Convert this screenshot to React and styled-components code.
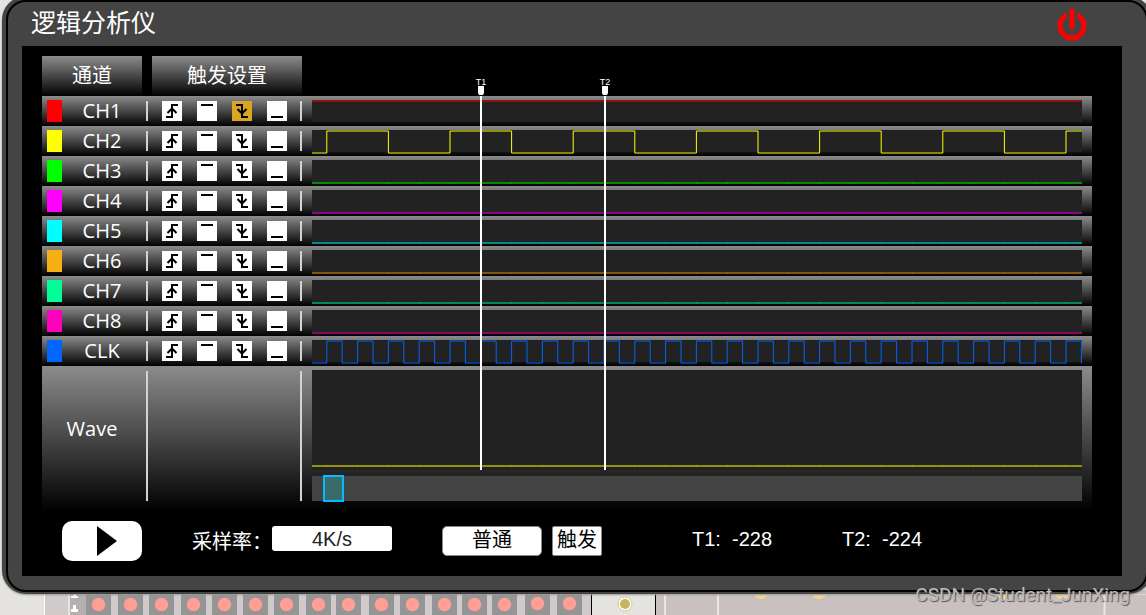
import React, { useState } from "react";
import styled, { createGlobalStyle, css } from "styled-components";

const GlobalStyle = createGlobalStyle`
  * { box-sizing: border-box; }
  body {
    margin: 0;
    min-height: 100vh;
    overflow: hidden;
    background: #e4e3df;
    font-family: "Open Sans", "Noto Sans CJK SC", sans-serif;
    color: #fff;
  }
`;

const metal = css`
  background: linear-gradient(#8c8c8c, #000);
`;

const Page = styled.div`
  position: relative;
  min-height: 100vh;
  overflow: hidden;
`;

const Frame = styled.main`
  position: relative;
  margin: -4px -6px 0 2px;
  padding: 4px 4px 2px;
  background: #444;
  border-radius: 24px;
  box-shadow: 0 1px 2px #999;
`;

const Bezel = styled.div`
  border: 2px solid #000;
  border-radius: 20px;
  padding: 0 24px 14px 14px;
`;

const TitleBar = styled.header`
  display: flex;
  align-items: center;
  justify-content: space-between;
  height: 44px;
  padding: 0 33px 0 9px;
`;

const Title = styled.h1`
  margin: 0 0 4px;
  font-size: 25px;
  line-height: 40px;
  font-weight: 400;
`;

const PowerButton = styled.button`
  display: flex;
  padding: 0;
  border: 0;
  background: none;
`;

const Screen = styled.section`
  background: #000;
  padding: 10px 30px 15px 20px;
`;

const Headings = styled.div`
  display: flex;
  gap: 10px;
`;

const Heading = styled.h2`
  ${metal}
  width: ${(p) => p.$width}px;
  margin: 0;
  font-size: 20px;
  line-height: 40px;
  font-weight: 400;
  text-align: center;
`;

const Scope = styled.div`
  position: relative;
`;

const Row = styled.div`
  ${metal}
  display: flex;
  align-items: flex-start;
  height: ${(p) => (p.$tall ? 145 : 30)}px;
  padding: 4px 10px 0 5px;
`;

const Swatch = styled.span`
  width: 15px;
  height: 22px;
  background: ${(p) => p.$color};
`;

const ChannelName = styled.span`
  width: 80px;
  margin-right: 4px;
  font-size: 20px;
  line-height: 22px;
  font-weight: 500;
  text-align: center;
`;

const WaveName = styled(ChannelName)`
  width: 90px;
  margin-right: 9px;
  line-height: 118px;
`;

const TriggerSet = styled.div`
  display: flex;
  gap: 15px;
  width: 156px;
  height: ${(p) => (p.$tall ? 130 : 20)}px;
  margin: 1px 10px 0 0;
  padding: 0 13px 0 14px;
  border: solid #d3d3d3;
  border-width: 0 2px;
`;

const TriggerButton = styled.button`
  display: flex;
  width: 20px;
  height: 20px;
  padding: 0;
  border: 0;
  background: ${(p) => (p.$active ? "goldenrod" : "#fff")};
`;

const Lane = styled.div`
  flex: 1;
  min-width: 0;
  height: ${(p) => p.$height}px;
  background: #222;

  svg {
    display: block;
    width: 100%;
    overflow: hidden;
  }
`;

const WaveColumn = styled.div`
  flex: 1;
  min-width: 0;
  display: flex;
  flex-direction: column;
  gap: 6px;

  > div:first-child { flex: none; }
`;

const Scroller = styled.div`
  display: flex;
  align-items: center;
  height: 25px;
  padding-left: 11px;
  background: #444;
`;

const Thumb = styled.button`
  flex: none;
  width: 21px;
  height: 27px;
  padding: 0;
  border: 2px solid #00bfff;
  background: #3a6b6b;
`;

const Marker = styled.div`
  position: absolute;
  top: -18px;
  left: ${(p) => p.$left}px;
  display: flex;
  flex-direction: column;
  align-items: center;
  width: 20px;
  font: 9px/8px "Liberation Sans", sans-serif;

  svg { display: block; }
  &::after {
    content: "";
    width: 2px;
    height: 374px;
    background: #fff;
  }
`;

const Controls = styled.div`
  display: flex;
  align-items: flex-start;
  padding: 10px 0 0 20px;
  font: 20px/24px "Liberation Sans", "Noto Sans CJK SC", sans-serif;
`;

const PlayButton = styled.button`
  display: flex;
  width: 80px;
  height: 40px;
  margin-right: 50px;
  padding: 5px 25px 5px 35px;
  border: 0;
  border-radius: 10px;
  background: #fff;
`;

const RateLabel = styled.label`
  width: 80px;
  padding-top: 9px;
  white-space: nowrap;
`;

const RateSelect = styled.select`
  appearance: none;
  width: 120px;
  height: 25px;
  margin: 5px 50px 0 0;
  padding: 0;
  border: 0;
  border-radius: 3px;
  background: #fff;
  color: #222;
  font: inherit;
  text-align: center;
  text-align-last: center;
`;

const ModeButton = styled.button`
  width: ${(p) => p.$width}px;
  height: 30px;
  margin: 5px 10px 0 0;
  padding: 0 0 2px;
  border: 1px solid #888;
  border-radius: ${(p) => p.$radius}px;
  background: #fff;
  color: #000;
  font: inherit;
  white-space: nowrap;
`;

const Readout = styled.output`
  width: 150px;
  padding-top: 6px;
  white-space: pre;

  &:first-of-type { margin-left: 80px; }
`;

const Board = styled.svg`
  display: block;
  width: 100%;
  height: 25px;
  margin-top: -4px;
`;

const Watermark = styled.footer`
  position: absolute;
  right: 16px;
  bottom: 8px;
  font: 19px/24px Roboto, sans-serif;
  color: #bbb;
  text-shadow: 1px 1px 1px #555;
`;

const channels = [
  { name: "CH1", color: "#ff0000", level: 1 },
  { name: "CH2", color: "#ffff00", level: 0, half: 61.6 },
  { name: "CH3", color: "#00ff00", level: 0 },
  { name: "CH4", color: "#ff00ff", level: 0 },
  { name: "CH5", color: "#00ffff", level: 0 },
  { name: "CH6", color: "#f5b014", trace: "#f59b00", level: 0 },
  { name: "CH7", color: "#00ff99", level: 0 },
  { name: "CH8", color: "#ff00bb", level: 0 },
  { name: "CLK", color: "#0066ff", level: 0, half: 15.4 },
];

const triggers = [
  { name: "上升沿", d: "M4 16H10V4H16M5.500 12L10 7.500L14.500 12" },
  { name: "高电平", d: "M4 4H16" },
  { name: "下降沿", d: "M4 4H10V16H16M5.500 8L10 12.500L14.500 8" },
  { name: "低电平", d: "M4 16H16" },
];

const START = 14.8;
const SAMPLE = 30.8;
const SPAN = 2000;

function tracePath(level, half, low) {
  let y = level ? 1 : low;
  let d = `M0 ${y}`;
  if (half) {
    for (let x = START; x < SPAN; x += half) {
      const next = y === 1 ? low : 1;
      d += `H${x.toFixed(1)}V${next}`;
      y = next;
    }
  }
  return `${d}H${SPAN}`;
}

function Trace({ color, level, half, low = 23 }) {
  const ticks = [];
  if (!half) {
    const y = level ? 0 : low - 1;
    for (let x = START; x < SPAN; x += SAMPLE) ticks.push(`M${Math.floor(x) + 0.5} ${y}v2`);
  }
  return (
    <svg height={low + 1} aria-hidden="true">
      <path d={tracePath(level, half, low)} fill="none" stroke={color} />
      <path d={ticks.join("")} stroke={color} strokeOpacity="0.2" />
    </svg>
  );
}

function Cursor({ name, left }) {
  return (
    <Marker $left={left}>
      {name}
      <svg width="6" height="10" aria-hidden="true">
        <path d="M0 0H6V7L5 9H1L0 7Z" fill="#fff" />
      </svg>
    </Marker>
  );
}

const holes = [98, 130, 161, 193, 224, 255, 286, 318, 348, 381, 412, 444, 474, 504, 537, 569];

export default function App() {
  const [selected, setSelected] = useState({ CH1: 2 });
  return (
    <Page>
      <GlobalStyle />
      <Frame>
        <Bezel>
          <TitleBar>
            <Title>逻辑分析仪</Title>
            <PowerButton aria-label="电源">
              <svg width="34" height="34" viewBox="0 0 34 34">
                <path
                  d="M11.7 5.5A14.5 14.5 0 1 0 22.3 5.5V11.1A9.5 9.5 0 1 1 11.7 11.1Z"
                  fill="#f00"
                />
                <path d="M17 2V22" stroke="#f00" strokeWidth="5" />
              </svg>
            </PowerButton>
          </TitleBar>
          <Screen>
            <Headings>
              <Heading $width={100}>通道</Heading>
              <Heading $width={150}>触发设置</Heading>
            </Headings>
            <Scope>
              {channels.map((c) => (
                <Row key={c.name}>
                  <Swatch $color={c.color} />
                  <ChannelName>{c.name}</ChannelName>
                  <TriggerSet>
                    {triggers.map((t, i) => (
                      <TriggerButton
                        key={t.name}
                        aria-label={`${c.name} ${t.name}`}
                        $active={selected[c.name] === i}
                        onClick={() => setSelected({ ...selected, [c.name]: i })}
                      >
                        <svg width="20" height="20" aria-hidden="true">
                          <path d={t.d} fill="none" stroke="#000" strokeWidth="2" />
                        </svg>
                      </TriggerButton>
                    ))}
                  </TriggerSet>
                  <Lane $height={22}>
                    <Trace color={c.trace || c.color} level={c.level} half={c.half} />
                  </Lane>
                </Row>
              ))}
              <Row $tall>
                <WaveName>Wave</WaveName>
                <TriggerSet $tall />
                <WaveColumn>
                  <Lane $height={100}>
                    <Trace color="#ffff00" level={0} low={96} />
                  </Lane>
                  <Scroller>
                    <Thumb aria-label="滚动位置" />
                  </Scroller>
                </WaveColumn>
              </Row>
              <Cursor name="T1" left={429} />
              <Cursor name="T2" left={553} />
            </Scope>
            <Controls>
              <PlayButton aria-label="运行">
                <svg width="20" height="30">
                  <path d="M0 0L20 15L0 30Z" />
                </svg>
              </PlayButton>
              <RateLabel htmlFor="rate">采样率：</RateLabel>
              <RateSelect id="rate" defaultValue="4K/s">
                <option>4K/s</option>
                <option>8K/s</option>
              </RateSelect>
              <ModeButton $width={100} $radius={5}>普通</ModeButton>
              <ModeButton $width={50} $radius={2}>触发</ModeButton>
              <Readout>T1:  -228</Readout>
              <Readout>T2:  -224</Readout>
            </Controls>
          </Screen>
        </Bezel>
      </Frame>
      <Board aria-hidden="true">
        <path d="M45 0H591V30H45Z" fill="#d1caca" />
        <path d="M44.500 0V30M69 0V30" stroke="#fff" />
        <path d="M70 0H86V30H70Z" fill="#b5b0b0" />
        <path d="M71 8V6H73V4H76V6H78V8ZM71 22V19H73V15H76V19H78V22Z" fill="#fff" />
        {holes.map((x, i) => (
          <g key={x}>
            <path d={`M${x - 12} 0h25v30h-25Z`} fill="#959595" />
            <circle cx={x + 0.5} cy={i > 13 ? 13.5 : 14.5} r="6.700" fill="#ff9e94" />
          </g>
        ))}
        <path d="M591.5 0V30M655.5 0V30" stroke="#000" />
        <circle cx="625" cy="14" r="7" fill="#fff" stroke="#d8c88a" />
        <circle cx="625" cy="14" r="5" fill="#c8b45c" />
        <path d="M656 0H2000V30H656Z" fill="#c9c0c0" />
        <path d="M665 4V30M718 4V30M1104.500 4V30" stroke="#e8e6e0" strokeWidth="2" />
        <path d="M656 4.500H2000" stroke="#dcd7d5" />
        {[761, 819, 1003, 1062].map((x) => (
          <circle key={x} cx={x} cy="1" r="8" fill="#f0d696" />
        ))}
      </Board>
      <Watermark>CSDN @Student_JunXing</Watermark>
    </Page>
  );
}
